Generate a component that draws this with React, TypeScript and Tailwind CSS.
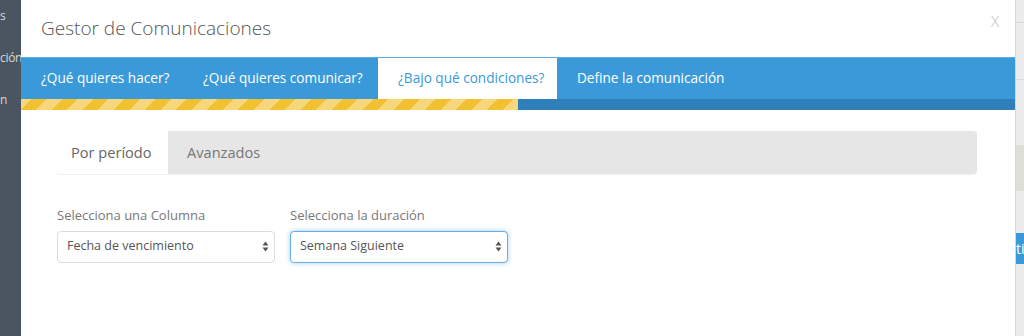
import React from "react";

const steps = [
  { label: "¿Qué quieres hacer?", w: "w-[162px]" },
  { label: "¿Qué quieres comunicar?", w: "w-[195px]" },
  { label: "¿Bajo qué condiciones?", w: "w-[179px]", active: true },
  { label: "Define la comunicación", w: "w-[190px]" },
];

function SelectArrows() {
  return (
    <svg width="7" height="11" viewBox="0 0 7 11" className="shrink-0">
      <path d="M3.5 0.5 L6.5 4.5 L0.5 4.5 Z" fill="#555" />
      <path d="M3.5 10.5 L6.5 6.5 L0.5 6.5 Z" fill="#555" />
    </svg>
  );
}

function FakeSelect({ value, focused = false }: { value: string; focused?: boolean }) {
  return (
    <div
      className={`flex h-[32px] w-[218px] items-center justify-between rounded-[4px] border bg-white pl-[9px] pr-[5px] text-[12.5px] text-[#555] ${
        focused
          ? "border-[#66afe9] shadow-[0_0_5px_rgba(102,175,233,0.6)]"
          : "border-[#dcdcdc]"
      }`}
    >
      <span>{value}</span>
      <SelectArrows />
    </div>
  );
}

export default function App() {
  return (
    <div
      className="flex h-[336px] w-[1024px] overflow-hidden bg-[#f2f2f2]"
      style={{ fontFamily: '"Open Sans", "Liberation Sans", sans-serif' }}
    >
      {/* Sidebar peeking behind the modal (only the tails of the items show) */}
      <div className="flex w-[21px] shrink-0 flex-col overflow-hidden bg-[#4b5561] text-[12px] leading-[20px] text-[#d5d9dd]">
        <div className="mt-[6px]">s</div>
        <div className="mt-[22px] whitespace-nowrap tracking-[-0.3px]">ción</div>
        <div className="mt-[22px]">n</div>
      </div>

      {/* Modal */}
      <div className="flex w-[994px] shrink-0 flex-col bg-white">
        <div className="flex h-[57px] items-center justify-between pl-[20px] pr-[16px]">
          <h1 className="text-[19px] font-light text-[#555]">Gestor de Comunicaciones</h1>
          <span className="-mt-[15px] text-[15px] font-light text-[#bbb]">X</span>
        </div>

        {/* Wizard steps */}
        <div className="flex h-[42px] border-t border-[#5aaee6] bg-[#3a9ad9]">
          {steps.map((s) => (
            <div
              key={s.label}
              className={`flex ${s.w} items-center pl-[20px] text-[13.6px] ${
                s.active ? "bg-white text-[#3a9ad9]" : "text-white"
              }`}
            >
              {s.label}
            </div>
          ))}
        </div>
        <div className="flex h-[11px] bg-[#2f7fbb]">
          <div className="h-full w-[497px] bg-[repeating-linear-gradient(-45deg,#f8d77b_0px,#f8d77b_11px,#f2c131_11px,#f2c131_22px)]" />
        </div>

        {/* Body */}
        <div className="px-[36px] pt-[21px]">
          <div className="flex h-[43px] w-[920px] overflow-hidden rounded-[4px] bg-[#e6e6e6] text-[14.6px] shadow-[0_1px_1px_rgba(0,0,0,0.06)]">
            <div className="flex w-[111px] items-center bg-white pl-[14px] text-[#666]">Por período</div>
            <div className="flex items-center pl-[19px] text-[#777]">Avanzados</div>
          </div>

          <div className="mt-[32px] flex gap-[15px]">
            <div className="flex flex-col">
              <label className="mb-[5px] text-[13px] text-[#777]">Selecciona una Columna</label>
              <FakeSelect value="Fecha de vencimiento" />
            </div>
            <div className="flex flex-col">
              <label className="mb-[5px] text-[13px] text-[#777]">Selecciona la duración</label>
              <FakeSelect value="Semana Siguiente" focused />
            </div>
          </div>
        </div>
      </div>

      {/* Page behind, right edge */}
      <div className="flex w-[9px] shrink-0 flex-col border-l border-[#d6d6d6] bg-[#ececec]">
        <div className="mt-[22px] h-px bg-[#dadada]" />
        <div className="mt-[56px] h-px bg-[#dadada]" />
        <div className="mt-[65px] h-[46px] bg-[#dcdfd6]" />
        <div className="mt-[42px] flex h-[31px] items-center overflow-hidden whitespace-nowrap bg-[#3a9ad9] text-[14px] text-white">
          ti
        </div>
      </div>
    </div>
  );
}
